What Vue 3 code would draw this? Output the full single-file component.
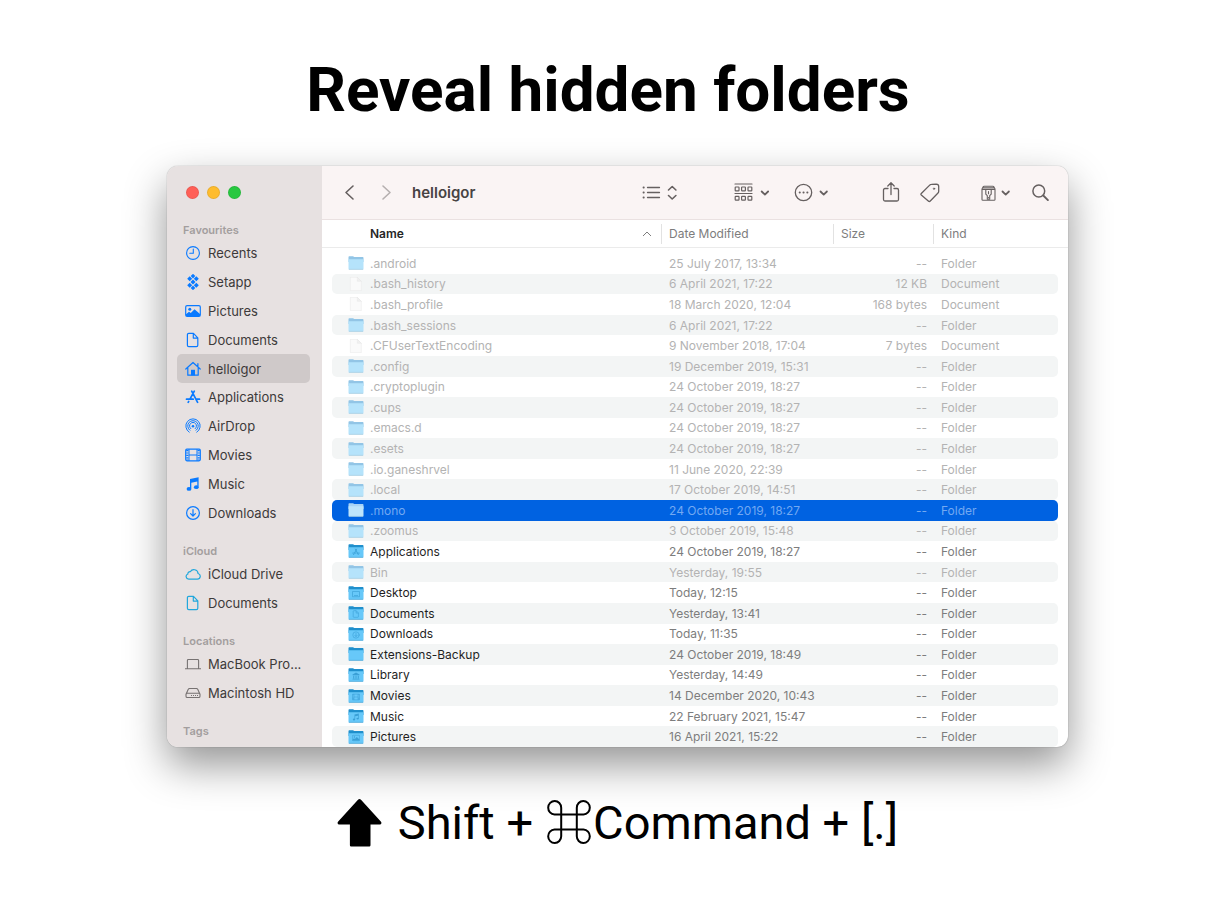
<template>
  <main class="page">
    <!-- Icon sprite -->
    <svg class="sprite" aria-hidden="true">
      <symbol id="i-recents" viewBox="0 0 16 16">
        <g fill="none" stroke="currentColor" stroke-width="1.1" stroke-linecap="round">
          <circle cx="8" cy="8" r="6.4" />
          <path d="M8.3 4v4.2H4.8" />
        </g>
      </symbol>
      <symbol id="i-setapp" viewBox="0 0 16 16">
        <path
          fill="currentColor"
          d="M8-.2l2.3 2.3L8 4.4 5.7 2.1zM4.7 2.2l2.5 2.5-2.5 2.5-2.5-2.5zM11.3 2.2l2.5 2.5-2.5 2.5-2.5-2.5zM8 5.5L10.5 8 8 10.5 5.5 8zM4.7 8.8l2.5 2.5-2.5 2.5-2.5-2.5zM11.3 8.8l2.5 2.5-2.5 2.5-2.5-2.5zM8 11.6l2.3 2.3L8 16.2l-2.3-2.3z"
        />
      </symbol>
      <symbol id="i-pictures" viewBox="0 0 16 16">
        <rect x="0.7" y="2.6" width="14.6" height="10.8" rx="1.4" fill="none" stroke="currentColor" stroke-width="1.2" />
        <circle cx="4.8" cy="6.2" r="1.5" fill="currentColor" />
        <path fill="currentColor" d="M1 11.3l3-2.6 1.8 1.4 3.7-3.9 5.5 4.9V13H1z" />
      </symbol>
      <symbol id="i-doc" viewBox="0 0 16 16">
        <path
          fill="none"
          stroke="currentColor"
          stroke-width="1.2"
          stroke-linejoin="round"
          d="M3.8 1.4h4.7l4.3 4.4v7.4c0 .9-.5 1.4-1.4 1.4H3.8c-.9 0-1.4-.5-1.4-1.4V2.8c0-.9.5-1.4 1.4-1.4zM8.3 1.6v4.5h4.4"
        />
      </symbol>
      <symbol id="i-home" viewBox="0 0 16 16">
        <path
          fill="none"
          stroke="currentColor"
          stroke-width="1.2"
          stroke-linecap="round"
          stroke-linejoin="round"
          d="M.8 8L8 1.5 15.2 8M2.8 6.8v7.4h10.4V6.8M12.9 5V2.7"
        />
        <path fill="currentColor" d="M6 8.8h4v5.6H6z" />
      </symbol>
      <symbol id="i-apps" viewBox="0 0 16 16">
        <path
          fill="none"
          stroke="currentColor"
          stroke-width="1.7"
          stroke-linecap="round"
          d="M6.7 2.2l5.9 11.1M9.3 2.2L5.2 9.7M3.7 12.4l-.5.9M1.5 10.2h6.7M11.2 10.2h3.3"
        />
      </symbol>
      <symbol id="i-airdrop" viewBox="0 0 16 16">
        <g fill="none" stroke="currentColor" stroke-width="1" stroke-linecap="round">
          <path d="M4.2 14.2a7.2 7.2 0 1 1 7.6 0" />
          <path d="M4.9 12.3a5.3 5.3 0 1 1 6.2 0" />
          <path d="M5.8 10.7a3.5 3.5 0 1 1 4.4 0" />
        </g>
        <circle cx="8" cy="8.2" r="1.3" fill="currentColor" />
      </symbol>
      <symbol id="i-movies" viewBox="0 0 16 16">
        <g fill="none" stroke="currentColor">
          <rect x="0.7" y="2.2" width="14.6" height="11.6" rx="1.2" stroke-width="1.2" />
          <path stroke-width="1" d="M4 2.2v11.6M12 2.2v11.6M4 8h8" />
          <path stroke-width="2.2" stroke-dasharray="1.2 1.2" d="M2.3 3v10.5M13.7 3v10.5" />
        </g>
      </symbol>
      <symbol id="i-music" viewBox="0 0 16 16">
        <path fill="currentColor" d="M5 3.1l8.6-1.9v9.6h-1.3V5.4L6.3 6.7v5.9H5z" />
        <ellipse cx="4" cy="12.9" rx="2.4" ry="1.9" fill="currentColor" />
        <ellipse cx="11.3" cy="11.2" rx="2.4" ry="1.9" fill="currentColor" />
      </symbol>
      <symbol id="i-downloads" viewBox="0 0 16 16">
        <g fill="none" stroke="currentColor" stroke-width="1.2" stroke-linecap="round" stroke-linejoin="round">
          <circle cx="8" cy="8" r="6.4" />
          <path d="M8 4.7v6.2M5.6 8.7L8 11.1l2.4-2.4" />
        </g>
      </symbol>
      <symbol id="i-cloud" viewBox="0 0 16 16">
        <path
          fill="none"
          stroke="currentColor"
          stroke-width="1.2"
          d="M3.7 13.2h8.7a2.9 2.9 0 0 0 .7-5.7A4.2 4.2 0 0 0 5.3 5.7 2.2 2.2 0 0 0 2.8 8a2.7 2.7 0 0 0 .9 5.2z"
        />
      </symbol>
      <symbol id="i-laptop" viewBox="0 0 16 16">
        <path fill="none" stroke="currentColor" stroke-width="1.1" d="M2.4 12.5V4.4c0-.6.3-.9.9-.9h9.4c.6 0 .9.3.9.9v8.1M0 12.7h16" />
      </symbol>
      <symbol id="i-disk" viewBox="0 0 16 16">
        <path
          fill="none"
          stroke="currentColor"
          stroke-width="1.1"
          stroke-linejoin="round"
          d="M1 9.3l2.3-5c.3-.6.6-.8 1.2-.8h7c.6 0 .9.2 1.2.8l2.3 5v1.9c0 .8-.5 1.3-1.3 1.3H2.3c-.8 0-1.3-.5-1.3-1.3zM1 9.8c0-1 .5-1.5 1.3-1.5h11.4c.8 0 1.3.5 1.3 1.5"
        />
        <path stroke="currentColor" stroke-width="1.2" stroke-dasharray="1 1" d="M6 10.5h7" />
      </symbol>

      <symbol id="f-folder" viewBox="0 0 16 14">
        <path class="folder-back" d="M.5 1.2C.5.5.8.2 1.5.2h3.4c.9 0 1.1.9 2 .9h7.6c.6 0 1 .3 1 1V6H.5z" />
        <path class="folder-front" d="M.5 3.2h15v9.2c0 .6-.4 1-1 1h-13c-.6 0-1-.4-1-1z" />
        <path class="folder-edge" d="M.8 12.9h14.4v.7H.8z" />
      </symbol>
      <symbol id="f-file" viewBox="0 0 16 14">
        <path fill="#fafafa" stroke="#e6e6e6" stroke-width="0.5" d="M2.3.3h7l4 4v9.4h-11z" />
        <path fill="#f0f0f0" stroke="#e3e3e3" stroke-width="0.4" d="M9.3.3v4h4z" />
      </symbol>
      <symbol id="i-library" viewBox="0 0 16 16">
        <path fill="currentColor" d="M1 5l7-4 7 4v1.5H1zM2.5 7.5h2V13h-2zM7 7.5h2V13H7zM11.5 7.5h2V13h-2zM1 13.5h14V15H1z" />
      </symbol>
      <symbol id="i-desktop" viewBox="0 0 16 16">
        <path fill="none" stroke="currentColor" stroke-width="1.3" d="M1 3h14v10.5H1zM4 11h8" />
      </symbol>
    </svg>

    <h1 class="title">Reveal hidden folders</h1>

    <section class="window">
      <aside class="sidebar">
        <div class="lights">
          <button class="light light--close" type="button" aria-label="Close"></button>
          <button class="light light--min" type="button" aria-label="Minimise"></button>
          <button class="light light--max" type="button" aria-label="Zoom"></button>
        </div>

        <nav v-for="group in groups" :key="group.title" class="group" :class="`group--${group.id}`">
          <h2 class="group-title">{{ group.title }}</h2>
          <ul v-if="group.items.length" class="group-list">
            <li v-for="item in group.items" :key="item.name">
              <a href="#" class="place" :class="{ 'place--active': item.active }">
                <svg class="place-icon" aria-hidden="true"><use :href="`#i-${item.icon}`" /></svg>
                <span class="place-name">{{ item.name }}</span>
              </a>
            </li>
          </ul>
        </nav>
      </aside>

      <div class="content">
        <header class="toolbar">
          <button class="tool" type="button" aria-label="Back">
            <svg width="12" height="18" viewBox="0 0 12 18"><path d="M10 2L3 8.500l7 6.500" stroke-width="1.6" /></svg>
          </button>
          <button class="tool tool--forward" type="button" aria-label="Forward">
            <svg width="12" height="18" viewBox="0 0 12 18"><path d="M2 2l7 6.500L2 15" stroke-width="1.6" /></svg>
          </button>
          <h2 class="folder-name">helloigor</h2>

          <button class="tool tool--view" type="button" aria-label="View as list">
            <svg width="36" height="20" viewBox="0 0 36 20">
              <path d="M1.5 4.5h.3M1.5 9.5h.3M1.5 14.5h.3" stroke-width="1.8" />
              <path d="M5.5 4.5h12M5.5 9.5h12M5.5 14.5h12" stroke-width="1.3" />
              <path d="M26.500 7l3.700-3.500L33.900 7M26.500 12.500l3.700 3.500 3.700-3.500" stroke-width="1.6" />
            </svg>
          </button>
          <button class="tool tool--group" type="button" aria-label="Group by">
            <svg width="36" height="20" viewBox="0 0 36 20">
              <g stroke-width="1.2">
                <path d="M1 1h17M1 10.5h17" />
                <rect x="1.2" y="4" width="3.8" height="3.8" rx="0.6" />
                <rect x="7.6" y="4" width="3.8" height="3.8" rx="0.6" />
                <rect x="14" y="4" width="3.8" height="3.8" rx="0.6" />
                <rect x="1.2" y="13.4" width="3.8" height="3.8" rx="0.6" />
                <rect x="7.6" y="13.4" width="3.8" height="3.8" rx="0.6" />
                <rect x="14" y="13.4" width="3.8" height="3.8" rx="0.6" />
              </g>
              <path d="M27.7 8.5l3.200 3.100 3.200-3.100" stroke-width="1.8" />
            </svg>
          </button>
          <button class="tool tool--more" type="button" aria-label="More actions">
            <svg width="36" height="20" viewBox="0 0 36 20">
              <circle cx="9.5" cy="9.5" r="8.2" stroke-width="1.3" />
              <path d="M5.7 9.5h.1M9.5 9.5h.1M13.3 9.5h.1" stroke-width="2" />
              <path d="M26.5 8.5l3.2 3.1 3.2-3.1" stroke-width="1.8" />
            </svg>
          </button>
          <button class="tool tool--share" type="button" aria-label="Share">
            <svg width="18" height="22" viewBox="0 0 18 22">
              <path d="M6 6.5H3c-.9 0-1.5.6-1.5 1.5v9.5c0 .9.6 1.5 1.5 1.5h12c.9 0 1.5-.6 1.5-1.5V8c0-.9-.6-1.5-1.5-1.5h-3M9 12.5V1M5.8 4L9 .8 12.2 4" stroke-width="1.3" />
            </svg>
          </button>
          <button class="tool tool--tag" type="button" aria-label="Edit tags">
            <svg width="20" height="20" viewBox="0 0 20 20">
              <path d="M1.3 10.5l8.4-8.400c.5-.5 1-.7 1.700-.7l4.900-.2c1.400 0 2.400 1 2.400 2.400v4.700c0 .7-.2 1.200-.7 1.700l-7.700 8c-.7.7-1.300.7-2 0l-7-6c-.6-.6-.6-1 0-1.500z" stroke-width="1.3" />
              <circle cx="14" cy="5.7" r="0.7" stroke-width="1" />
            </svg>
          </button>
          <button class="tool tool--archive" type="button" aria-label="Archive">
            <svg width="32" height="20" viewBox="0 0 32 20">
              <g stroke-width="1.1">
                <path d="M2 6l1.200-2.300c.2-.4.500-.5.900-.5h8.800c.4 0 .7.100.9.5L15 6v10.400c0 .6-.3.900-.9.900H2.900c-.6 0-.9-.3-.9-.9zM2 6.500h13M3.500 4.900h10" />
                <path d="M5.800 6.500v4.700l1.500 1.500v3.500h2.400v-3.500l1.500-1.500V6.500M8.500 8.600v2.200M8.500 14.500v.2" />
              </g>
              <path d="M22.5 8.500l3.200 3.100 3.200-3.100" stroke-width="1.8" />
            </svg>
          </button>
          <button class="tool tool--search" type="button" aria-label="Search">
            <svg width="18" height="18" viewBox="0 0 18 18">
              <circle cx="7.800" cy="7" r="5.900" stroke-width="1.5" />
              <path d="M12.300 11.500l4.600 4.600" stroke-width="1.9" />
            </svg>
          </button>
        </header>

        <table class="files">
          <thead>
            <tr class="row row--head">
              <th class="col-name" scope="col">
                Name
                <svg class="sort" width="10" height="6" viewBox="0 0 10 6" aria-hidden="true">
                  <path d="M1 5l4-4 4 4" />
                </svg>
              </th>
              <th scope="col">Date Modified</th>
              <th scope="col">Size</th>
              <th scope="col">Kind</th>
            </tr>
          </thead>
          <tbody>
            <tr
              v-for="file in files"
              :key="file.name"
              class="row"
              :class="{ 'row--dim': file.dim, 'row--selected': file.selected }"
            >
              <td class="col-name">
                <span class="file-icon">
                  <svg class="file-shape" aria-hidden="true">
                    <use :href="file.kind === 'Folder' ? '#f-folder' : '#f-file'" />
                  </svg>
                  <svg v-if="file.badge" class="file-badge" aria-hidden="true">
                    <use :href="`#i-${file.badge}`" />
                  </svg>
                </span>
                {{ file.name }}
              </td>
              <td>{{ file.date }}</td>
              <td class="col-size">{{ file.size }}</td>
              <td>{{ file.kind }}</td>
            </tr>
          </tbody>
        </table>
      </div>
    </section>

    <p class="shortcut">
      <svg class="shift-key" viewBox="0 0 44 48" aria-hidden="true">
        <path d="M20.5.7c.9-.9 2.1-.9 3 0L43.3 22.500c1.200 1.400.7 3-1.300 3h-9V46c0 1-.6 1.600-1.600 1.600H14c-1 0-1.600-.6-1.600-1.600V25.500H2c-2 0-2.500-1.600-1.300-3z" />
      </svg>
      <span>Shift +</span>
      <svg class="command-key" viewBox="0 0 44 44" role="img" aria-label="Command key">
        <path d="M14.2 14.4H7.5a6.5 6.7 0 1 1 6.7-6.7v28.6a6.5 6.7 0 1 1-6.7-6.7h29a6.5 6.7 0 1 1-6.7 6.7V7.7a6.5 6.7 0 1 1 6.7 6.7z" />
      </svg>
      <span>Command + [.]</span>
    </p>
  </main>
</template>

<script setup>
const groups = [
  {
    id: 'favourites',
    title: 'Favourites',
    items: [
      { name: 'Recents', icon: 'recents' },
      { name: 'Setapp', icon: 'setapp' },
      { name: 'Pictures', icon: 'pictures' },
      { name: 'Documents', icon: 'doc' },
      { name: 'helloigor', icon: 'home', active: true },
      { name: 'Applications', icon: 'apps' },
      { name: 'AirDrop', icon: 'airdrop' },
      { name: 'Movies', icon: 'movies' },
      { name: 'Music', icon: 'music' },
      { name: 'Downloads', icon: 'downloads' },
    ],
  },
  {
    id: 'icloud',
    title: 'iCloud',
    items: [
      { name: 'iCloud Drive', icon: 'cloud' },
      { name: 'Documents', icon: 'doc' },
    ],
  },
  {
    id: 'locations',
    title: 'Locations',
    items: [
      { name: 'MacBook Pro...', icon: 'laptop' },
      { name: 'Macintosh HD', icon: 'disk' },
    ],
  },
  { id: 'tags', title: 'Tags', items: [] },
];

const folder = (name, date, extra = {}) => ({ name, date, size: '--', kind: 'Folder', ...extra });
const hidden = (name, date, extra = {}) => folder(name, date, { dim: true, ...extra });
const doc = (name, date, size) => ({ name, date, size, kind: 'Document', dim: true });

const files = [
  hidden('.android', '25 July 2017, 13:34'),
  doc('.bash_history', '6 April 2021, 17:22', '12 KB'),
  doc('.bash_profile', '18 March 2020, 12:04', '168 bytes'),
  hidden('.bash_sessions', '6 April 2021, 17:22'),
  doc('.CFUserTextEncoding', '9 November 2018, 17:04', '7 bytes'),
  hidden('.config', '19 December 2019, 15:31'),
  hidden('.cryptoplugin', '24 October 2019, 18:27'),
  hidden('.cups', '24 October 2019, 18:27'),
  hidden('.emacs.d', '24 October 2019, 18:27'),
  hidden('.esets', '24 October 2019, 18:27'),
  hidden('.io.ganeshrvel', '11 June 2020, 22:39'),
  hidden('.local', '17 October 2019, 14:51'),
  hidden('.mono', '24 October 2019, 18:27', { selected: true }),
  hidden('.zoomus', '3 October 2019, 15:48'),
  folder('Applications', '24 October 2019, 18:27', { badge: 'apps' }),
  hidden('Bin', 'Yesterday, 19:55'),
  folder('Desktop', 'Today, 12:15', { badge: 'desktop' }),
  folder('Documents', 'Yesterday, 13:41', { badge: 'doc' }),
  folder('Downloads', 'Today, 11:35', { badge: 'downloads' }),
  folder('Extensions-Backup', '24 October 2019, 18:49'),
  folder('Library', 'Yesterday, 14:49', { badge: 'library' }),
  folder('Movies', '14 December 2020, 10:43', { badge: 'movies' }),
  folder('Music', '22 February 2021, 15:47', { badge: 'music' }),
  folder('Pictures', '16 April 2021, 15:22', { badge: 'pictures' }),
];
</script>

<style>
body {
  background: #ffffff;
}
</style>

<style scoped>
.page {
  box-sizing: border-box;
  min-height: 100vh;
  padding: 53px 0 36px;
  background: #ffffff;
  color: #000000;
  font-family: Roboto, sans-serif;
}

.sprite {
  display: block;
  width: 0;
  height: 0;
}

.title {
  margin: 0;
  font-size: 62px;
  font-weight: 700;
  line-height: 74px;
  text-align: center;
}

/* Window */
.window {
  display: flex;
  margin: 39px 148px 0 167px;
  border-radius: 11px;
  overflow: hidden;
  background: #ffffff;
  box-shadow:
    0 0 1px rgba(0, 0, 0, 0.5),
    0 18px 42px rgba(0, 0, 0, 0.42);
  font-family: Inter, sans-serif;
}

/* Sidebar */
.sidebar {
  box-sizing: border-box;
  flex: 0 0 155px;
  padding: 20px 12px 0 10px;
  background: #e7e1e1;
}

.lights {
  display: flex;
  gap: 8px;
  padding-left: 9px;
}

.light {
  width: 13px;
  height: 13px;
  padding: 0;
  border: 1px solid rgba(0, 0, 0, 0.08);
  border-radius: 50%;
}

.light--close {
  background: #ff5f57;
}

.light--min {
  background: #febc2e;
}

.light--max {
  background: #28c840;
}

.group {
  margin-top: 16px;
}

.group--favourites {
  margin-top: 23px;
}

.group-title {
  margin: 0;
  padding-left: 6px;
  color: #a39e9e;
  font-size: 11px;
  font-weight: 600;
  line-height: 16px;
}

.group-list {
  display: grid;
  grid-auto-rows: 1fr;
  height: 57px;
  margin: 1px 0 0;
  padding: 0;
  list-style: none;
}

.group--favourites .group-list {
  height: 288px;
}

.place {
  display: flex;
  align-items: center;
  gap: 7px;
  box-sizing: border-box;
  height: 100%;
  padding: 0 8px;
  border-radius: 5px;
  color: #3d3a3a;
  font-size: 13px;
  text-decoration: none;
  white-space: nowrap;
}

.place--active {
  background: #cfc9c9;
}

.place-icon {
  flex: none;
  width: 16px;
  height: 16px;
  color: #0a7aff;
}

.group--icloud .place-icon {
  color: #22a7dc;
}

.group--locations .place-icon {
  color: #777272;
}

/* Toolbar */
.content {
  flex: 1;
  min-width: 0;
}

.toolbar {
  display: flex;
  align-items: center;
  box-sizing: border-box;
  height: 54px;
  padding: 0 19px 0 21px;
  border-bottom: 1px solid #eae1e1;
  background: #faf4f4;
}

.tool {
  display: flex;
  flex: none;
  padding: 0;
  border: 0;
  background: none;
  color: #666060;
}

.tool svg {
  fill: none;
  stroke: currentColor;
  stroke-linecap: round;
  stroke-linejoin: round;
}

.tool--forward {
  margin-left: 26px;
  color: #b5afaf;
}

.folder-name {
  flex: 1;
  margin: 0;
  padding-left: 19px;
  color: #474343;
  font-size: 15px;
  font-weight: 600;
}

.tool--group {
  margin-left: 56px;
}

.tool--more {
  margin-left: 24px;
}

.tool--share {
  margin-left: 52px;
}

.tool--tag {
  margin-left: 20px;
}

.tool--archive {
  margin-left: 40px;
}

.tool--search {
  margin-left: 19px;
}

/* File list */
.files {
  display: block;
  color: #7d7d7d;
  font-size: 12px;
}

.files thead {
  display: block;
}

.files tbody {
  display: grid;
  grid-auto-rows: 1fr;
  height: 494px;
  padding: 5px 10px 0;
}

.row {
  display: grid;
  grid-template-columns: minmax(0, 1fr) 172px 100px 125px;
  align-items: center;
  border-radius: 5px;
}

.row th,
.row td {
  padding: 0 6px 0 8px;
  text-align: left;
  white-space: nowrap;
}

.row .col-name {
  display: flex;
  align-items: center;
  gap: 6px;
  padding-left: 16px;
}

.row .col-size {
  text-align: right;
}

.row--head {
  height: 27px;
  padding: 0 10px;
  border-bottom: 1px solid #ebebeb;
  border-radius: 0;
}

.row--head th {
  border-left: 1px solid #e2e2e2;
  padding-left: 7px;
  font-weight: 400;
  line-height: 20px;
}

.row--head .col-name {
  justify-content: space-between;
  padding: 0 9px 0 38px;
  border-left: 0;
  color: #262626;
  font-weight: 600;
}

.sort {
  fill: none;
  stroke: #7d7d7d;
  stroke-width: 1;
}

tbody .row:nth-child(even) {
  background: #f3f5f5;
}

tbody .col-name {
  color: #1f1f1f;
}

.row--dim,
.row--dim .col-name {
  color: #b3b3b3;
}

tbody .row--selected:nth-child(n) {
  background: #0062e1;
}

.row--selected,
.row--selected .col-name {
  color: #73a9f2;
}

.file-icon {
  position: relative;
  display: flex;
  flex: none;
  width: 16px;
  height: 14px;
  --back: #1f8fcc;
  --front: #67c8f9;
  --edge: #4aa3d4;
}

.row--dim .file-icon {
  --back: #92c5e6;
  --front: #b5e3fb;
  --edge: #a3cbe0;
}

.row--selected .file-icon {
  --back: #a8d3f6;
  --front: #bde4fc;
  --edge: #a3cbe0;
}

.file-shape {
  width: 16px;
  height: 14px;
}

.folder-back {
  fill: var(--back);
}

.folder-front {
  fill: var(--front);
}

.folder-edge {
  fill: var(--edge);
}

/* Badge lies over the folder shape */
.file-badge {
  position: absolute;
  top: 4px;
  left: 4px;
  width: 8px;
  height: 8px;
  color: #3a9fd6;
}

/* Shortcut */
.shortcut {
  display: flex;
  align-items: center;
  justify-content: center;
  margin: 48px 148px 0 167px;
  font-size: 47px;
  line-height: 56px;
  white-space: nowrap;
}

.shift-key {
  width: 45px;
  height: 48px;
  margin-right: 16px;
}

.command-key {
  width: 44px;
  height: 44px;
  margin: 0 2px 2px 14px;
  fill: none;
  stroke: #000000;
  stroke-width: 2;
}
</style>
